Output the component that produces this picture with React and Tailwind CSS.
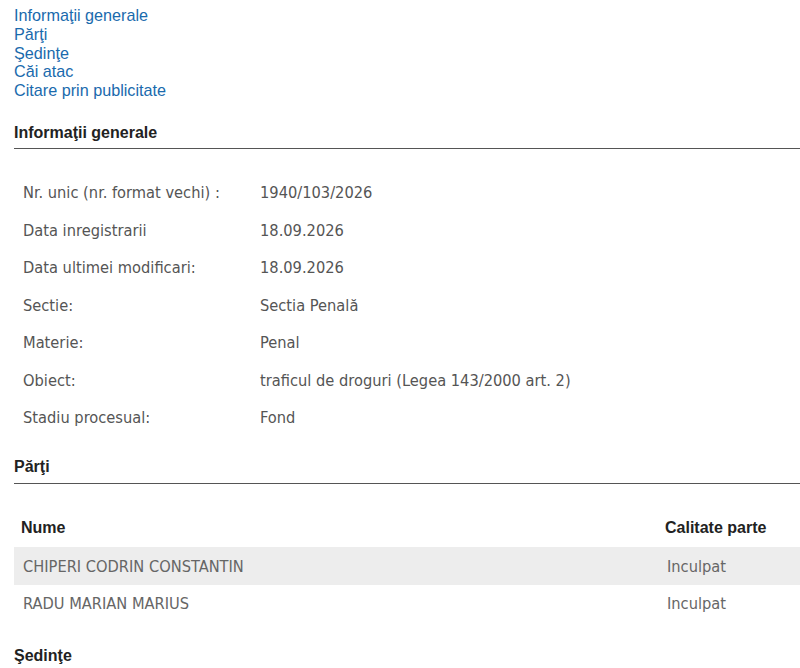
export default function App() {
  const info = [
    ["Nr. unic (nr. format vechi) :", "1940/103/2026"],
    ["Data inregistrarii", "18.09.2026"],
    ["Data ultimei modificari:", "18.09.2026"],
    ["Sectie:", "Sectia Penală"],
    ["Materie:", "Penal"],
    ["Obiect:", "traficul de droguri (Legea 143/2000 art. 2)"],
    ["Stadiu procesual:", "Fond"],
  ];
  const parti = [
    ["CHIPERI CODRIN CONSTANTIN", "Inculpat"],
    ["RADU MARIAN MARIUS", "Inculpat"],
  ];
  const links = ["Informaţii generale", "Părţi", "Şedinţe", "Căi atac", "Citare prin publicitate"];
  const body = { fontFamily: '"DejaVu Sans Condensed", "DejaVu Sans", sans-serif' };
  return (
    <div className="bg-white min-h-[668px] pl-[14px] pt-[6px] font-['Liberation_Sans',Arial,sans-serif] overflow-hidden">
      <div className="flex flex-col text-[16.2px] leading-[18.75px] text-[#1a6aad]">
        {links.map((l) => (
          <a key={l} href="#" className="w-fit">{l}</a>
        ))}
      </div>
      <h3 className="mt-[24px] text-[16px] font-bold text-[#222] leading-[18px] pb-[6px] border-b border-[#555]">
        Informaţii generale
      </h3>
      <div className="pt-[26px] pl-[9px] text-[16.3px] text-[#555]" style={body}>
        {info.map(([k, v]) => (
          <div key={k} className="flex h-[37.5px] items-center">
            <div className="w-[237px]">{k}</div>
            <div>{v}</div>
          </div>
        ))}
      </div>
      <h3 className="mt-[21px] text-[16px] font-bold text-[#222] leading-[18px] pb-[7px] border-b border-[#555]">
        Părţi
      </h3>
      <div className="pt-[25px]">
        <div className="flex h-[38px] items-center text-[16px] font-bold text-[#222] pl-[7px]">
          <div className="flex-1">Nume</div>
          <div className="w-[135px]">Calitate parte</div>
        </div>
        {parti.map(([n, c], i) => (
          <div
            key={n}
            className={`flex h-[37.5px] items-center pt-[2px] text-[16.3px] text-[#666] pl-[9px] ${i === 0 ? "bg-[#ededed]" : ""}`}
            style={body}
          >
            <div className="flex-1">{n}</div>
            <div className="w-[133px]">{c}</div>
          </div>
        ))}
      </div>
      <h3 className="mt-[25px] text-[16px] font-bold text-[#222] leading-[18px]">Şedinţe</h3>
    </div>
  );
}
